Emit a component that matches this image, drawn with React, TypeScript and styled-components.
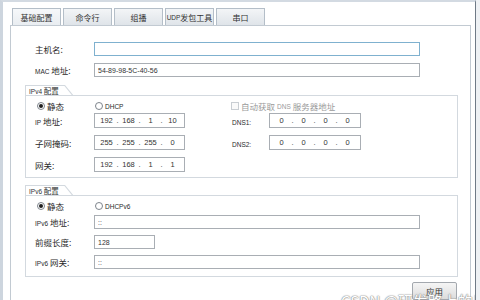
import React from "react";
import styled, { createGlobalStyle } from "styled-components";

const GlobalStyle = createGlobalStyle`
  html, body { margin: 0; padding: 0; background: #eef1f4; }
  body { width: 480px; height: 300px; overflow: hidden; }
  * { box-sizing: border-box; }
`;

const CJK = `"Noto Sans CJK SC", "Liberation Sans", sans-serif`;
const LATIN = `"Liberation Sans", "Noto Sans CJK SC", sans-serif`;

const Window = styled.div`
  position: relative;
  width: 476px;
  height: 300px;
  overflow: hidden;
  background: #ffffff;
  border-left: 3px solid #cdd5de;
  border-top: 2px solid #d3dae2;
  border-right: 1px solid #6f7a86;
  padding: 6px 4px 0 7px;
  display: flex;
  flex-direction: column;
  font-family: ${CJK};
  color: #2b2b2b;
`;

const TabBar = styled.div`
  display: flex;
  gap: 2px;
  padding-left: 2px;
  height: 17px;
`;

const Tab = styled.div<{ $active?: boolean }>`
  width: 49px;
  height: 17px;
  border: 1px solid #b4bec8;
  border-bottom: none;
  background: ${(p) =>
    p.$active
      ? "linear-gradient(#f6f8fa, #e9edf1)"
      : "linear-gradient(#f3f5f7, #dfe4e9)"};
  display: flex;
  align-items: center;
  justify-content: center;
  font-size: 8px;
  color: #333;
  white-space: nowrap;
`;

const Panel = styled.div`
  flex: 1;
  border: 1px solid #c2cad2;
  border-bottom: none;
  padding: 16px 0 0 24px;
  display: flex;
  flex-direction: column;
`;

const FieldRow = styled.div<{ $gap?: number }>`
  display: grid;
  grid-template-columns: 59px auto;
  align-items: center;
  height: 14px;
  margin-top: ${(p) => p.$gap ?? 0}px;
`;

const Label = styled.span<{ $col?: number }>`
  grid-column: ${(p) => p.$col ?? "auto"};
  font-size: 8.5px;
  color: #2a2a2a;
  white-space: nowrap;
`;

const TextBox = styled.div<{ $width: number; $focused?: boolean }>`
  width: ${(p) => p.$width}px;
  height: 14px;
  border: 1px solid ${(p) => (p.$focused ? "#7fb1cf" : "#a9aeb4")};
  background: #fff;
  font-family: ${LATIN};
  font-size: 7px;
  color: #333;
  display: flex;
  align-items: center;
  padding-left: 3px;
  white-space: nowrap;
`;

const Group = styled.div<{ $gap: number }>`
  width: 433px;
  margin-left: -10px;
  margin-top: ${(p) => p.$gap}px;
  display: flex;
  flex-direction: column;
`;

const GroupTitle = styled.div`
  position: relative;
  width: 40px;
  height: 10px;
  border-top: 1px solid #d3d9df;
  border-left: 1px solid #d3d9df;
  font-size: 7.5px;
  line-height: 9px;
  padding-left: 3px;
  color: #333;
  white-space: nowrap;
  &::after {
    content: "";
    position: absolute;
    left: 100%;
    top: -1px;
    width: 13px;
    height: 1px;
    background: #d3d9df;
    transform-origin: 0 0;
    transform: rotate(51deg);
  }
`;

const GroupBody = styled.div<{ $pb: number }>`
  border: 1px solid #d3d9df;
  padding: 4px 0 ${(p) => p.$pb}px 9px;
  display: flex;
  flex-direction: column;
`;

const OptionRow = styled.div`
  display: grid;
  grid-template-columns: 59px 138px auto;
  align-items: center;
  height: 9px;
`;

const Option = styled.label<{ $shift?: number; $disabled?: boolean }>`
  display: flex;
  align-items: center;
  gap: 2px;
  margin-left: ${(p) => p.$shift ?? 0}px;
  font-size: 8.5px;
  color: ${(p) => (p.$disabled ? "#9a9a9a" : "#2a2a2a")};
  white-space: nowrap;
`;

const Small = styled.span`
  font-family: ${LATIN};
  font-size: 6.5px;
`;

const RadioDot = styled.span<{ $checked?: boolean }>`
  width: 8px;
  height: 8px;
  border-radius: 50%;
  border: 1px solid #7d848c;
  background: #fff;
  display: flex;
  align-items: center;
  justify-content: center;
  &::after {
    content: "";
    width: 4px;
    height: 4px;
    border-radius: 50%;
    background: ${(p) => (p.$checked ? "#1f1f1f" : "transparent")};
  }
`;

const CheckBox = styled.span`
  width: 8px;
  height: 8px;
  border: 1px solid #c9ced3;
  background: #fafafa;
`;

const AddrGrid = styled.div`
  display: grid;
  grid-template-columns: 59px 91px 47px 37px 92px;
  grid-auto-rows: 15px;
  row-gap: 7px;
  align-items: center;
  margin-top: 4px;
`;

const AddrBox = styled.div<{ $col: number }>`
  grid-column: ${(p) => p.$col};
  height: 15px;
  border: 1px solid #a9aeb4;
  background: #fff;
  display: flex;
  align-items: center;
  padding-left: 2px;
  font-family: ${LATIN};
  font-size: 7.5px;
  color: #333;
`;

const Octet = styled.span`
  width: 19px;
  text-align: center;
`;

const Dot = styled.span`
  width: 3px;
  text-align: center;
`;

const Stack6 = styled.div`
  display: flex;
  flex-direction: column;
  margin-top: 6px;
`;

const ButtonRow = styled.div`
  width: 433px;
  margin-left: -10px;
  margin-top: 5px;
  display: flex;
  justify-content: flex-end;
  padding-right: 1px;
`;

const Button = styled.div`
  width: 45px;
  height: 18px;
  border: 1px solid #a3a8ae;
  border-radius: 2px;
  background: linear-gradient(#f5f5f5, #dcdcdc);
  display: flex;
  align-items: center;
  justify-content: center;
  font-size: 8.5px;
  color: #333;
`;

const Watermark = styled.div`
  position: absolute;
  left: 338px;
  top: 290px;
  font-family: ${CJK};
  font-size: 15px;
  line-height: 18px;
  color: #ffffff;
  white-space: nowrap;
  text-shadow: 0 0 1px #8a8a8a, 0 0 1px #8a8a8a, 0 0 2px #a0a0a0;
`;

const AddressBox: React.FC<{ col: number; value: string }> = ({ col, value }) => {
  const parts = value.split(".");
  return (
    <AddrBox $col={col}>
      {parts.map((p, i) => (
        <React.Fragment key={i}>
          <Octet>{p}</Octet>
          {i < parts.length - 1 && <Dot>.</Dot>}
        </React.Fragment>
      ))}
    </AddrBox>
  );
};

export default function App() {
  return (
    <>
      <GlobalStyle />
      <Window>
        <TabBar>
          <Tab $active>基础配置</Tab>
          <Tab>命令行</Tab>
          <Tab>组播</Tab>
          <Tab>
            <Small>UDP</Small>发包工具
          </Tab>
          <Tab>串口</Tab>
        </TabBar>
        <Panel>
          <FieldRow>
            <Label>主机名:</Label>
            <TextBox $width={326} $focused />
          </FieldRow>
          <FieldRow $gap={7}>
            <Label>
              <Small>MAC</Small> 地址:
            </Label>
            <TextBox $width={326}>54-89-98-5C-40-56</TextBox>
          </FieldRow>

          <Group $gap={8}>
            <GroupTitle>
              <Small>IPv4</Small> 配置
            </GroupTitle>
            <GroupBody $pb={5}>
              <OptionRow>
                <Option $shift={2}>
                  <RadioDot $checked />
                  静态
                </Option>
                <Option $shift={1}>
                  <RadioDot />
                  <Small>DHCP</Small>
                </Option>
                <Option $shift={-1} $disabled>
                  <CheckBox />
                  自动获取 <Small>DNS</Small> 服务器地址
                </Option>
              </OptionRow>
              <AddrGrid>
                <Label>
                  <Small>IP</Small> 地址:
                </Label>
                <AddressBox col={2} value="192.168.1.10" />
                <Label $col={4}>
                  <Small>DNS1:</Small>
                </Label>
                <AddressBox col={5} value="0.0.0.0" />
                <Label>子网掩码:</Label>
                <AddressBox col={2} value="255.255.255.0" />
                <Label $col={4}>
                  <Small>DNS2:</Small>
                </Label>
                <AddressBox col={5} value="0.0.0.0" />
                <Label>网关:</Label>
                <AddressBox col={2} value="192.168.1.1" />
              </AddrGrid>
            </GroupBody>
          </Group>

          <Group $gap={7}>
            <GroupTitle>
              <Small>IPv6</Small> 配置
            </GroupTitle>
            <GroupBody $pb={7}>
              <OptionRow>
                <Option $shift={2}>
                  <RadioDot $checked />
                  静态
                </Option>
                <Option $shift={1}>
                  <RadioDot />
                  <Small>DHCPv6</Small>
                </Option>
              </OptionRow>
              <Stack6>
                <FieldRow>
                  <Label>
                    <Small>IPv6</Small> 地址:
                  </Label>
                  <TextBox $width={326}>::</TextBox>
                </FieldRow>
                <FieldRow $gap={6}>
                  <Label>前缀长度:</Label>
                  <TextBox $width={61}>128</TextBox>
                </FieldRow>
                <FieldRow $gap={6}>
                  <Label>
                    <Small>IPv6</Small> 网关:
                  </Label>
                  <TextBox $width={326}>::</TextBox>
                </FieldRow>
              </Stack6>
            </GroupBody>
          </Group>

          <ButtonRow>
            <Button>应用</Button>
          </ButtonRow>
        </Panel>
        <Watermark>CSDN @研发路上的日常</Watermark>
      </Window>
    </>
  );
}
